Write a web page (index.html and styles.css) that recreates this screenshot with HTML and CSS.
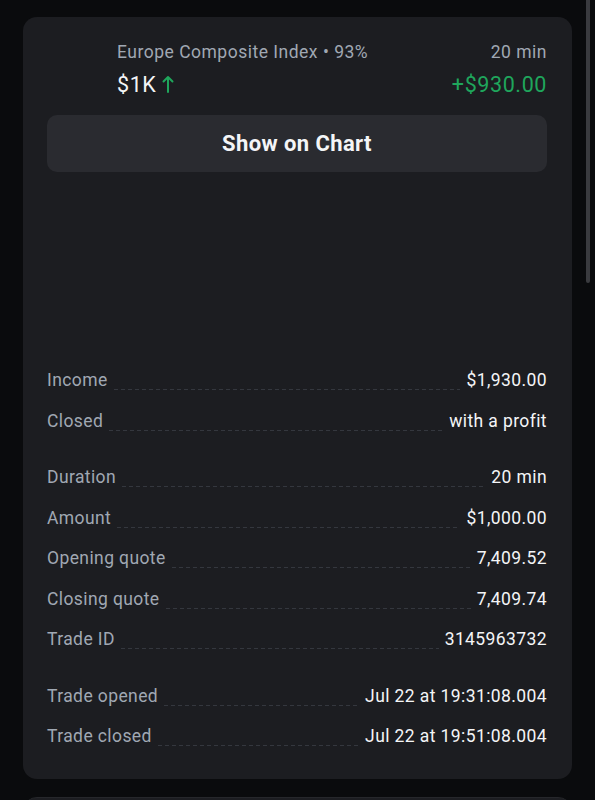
FILE: index.html
```html
<!DOCTYPE html>
<html lang="en">
<head>
<meta charset="utf-8">
<title>Trade details</title>
<link rel="stylesheet" href="styles.css">
</head>
<body>
<div class="page">
  <div class="card">
    <div class="head">
      <div class="head-row">
        <span class="asset">Europe Composite Index • 93%</span>
        <span class="dur">20 min</span>
      </div>
      <div class="head-row second">
        <span class="amount">$1K
          <svg class="arrow" width="12" height="18" viewBox="0 0 12 18"><path d="M6 17V2M1.5 6.5L6 2l4.5 4.5" fill="none" stroke="#1fa65c" stroke-width="2" stroke-linecap="round" stroke-linejoin="round"/></svg>
        </span>
        <span class="profit">+$930.00</span>
      </div>
    </div>
    <button class="chart-btn">Show on Chart</button>
    <div class="details">
      <div class="group">
        <div class="row"><span class="label">Income</span><span class="dots"></span><span class="value">$1,930.00</span></div>
        <div class="row"><span class="label">Closed</span><span class="dots"></span><span class="value">with a profit</span></div>
      </div>
      <div class="group">
        <div class="row"><span class="label">Duration</span><span class="dots"></span><span class="value">20 min</span></div>
        <div class="row"><span class="label">Amount</span><span class="dots"></span><span class="value">$1,000.00</span></div>
        <div class="row"><span class="label">Opening quote</span><span class="dots"></span><span class="value">7,409.52</span></div>
        <div class="row"><span class="label">Closing quote</span><span class="dots"></span><span class="value">7,409.74</span></div>
        <div class="row"><span class="label">Trade ID</span><span class="dots"></span><span class="value">3145963732</span></div>
      </div>
      <div class="group">
        <div class="row"><span class="label">Trade opened</span><span class="dots"></span><span class="value">Jul 22 at 19:31:08.004</span></div>
        <div class="row"><span class="label">Trade closed</span><span class="dots"></span><span class="value">Jul 22 at 19:51:08.004</span></div>
      </div>
    </div>
  </div>
  <div class="card next"></div>
  <div class="scrollbar"></div>
</div>
</body>
</html>
```
FILE: styles.css
```css
* { box-sizing: border-box; }
html, body { margin: 0; padding: 0; }
body {
  background: #0a0b0d;
  font-family: Roboto, "Liberation Sans", sans-serif;
  width: 595px;
  height: 800px;
  overflow: hidden;
}
.page {
  position: relative;
  padding: 17px 0 0 23px;
}
.card {
  width: 549px;
  height: 762px;
  background: #1c1d21;
  border-radius: 14px;
  padding: 23px 25px 0 24px;
}
.card.next {
  margin-top: 18px;
  height: 40px;
  border-top: 1px solid #26272b;
}
.scrollbar {
  position: absolute;
  top: 0;
  left: 586px;
  width: 4px;
  height: 283px;
  background: #3a3b3f;
  border-radius: 0 0 2px 2px;
}
.head {
  padding-left: 70px;
}
.head-row {
  display: flex;
  justify-content: space-between;
  align-items: center;
  height: 24px;
  font-size: 17.5px;
  letter-spacing: 0.5px;
  color: #a0a8b3;
}
.head-row.second {
  margin-top: 6px;
  height: 28px;
  font-size: 21.5px;
  letter-spacing: 0.6px;
}
.amount {
  color: #f4f5f7;
  display: flex;
  align-items: center;
  gap: 6px;
}
.arrow { display: block; }
.profit { color: #1fa65c; }
.chart-btn {
  display: block;
  width: 500px;
  height: 57px;
  margin-top: 17px;
  border: none;
  border-radius: 10px;
  background: #2a2b30;
  color: #f4f5f7;
  font-family: Roboto, "Liberation Sans", sans-serif;
  font-weight: 700;
  font-size: 22px;
  letter-spacing: 0.4px;
}
.details {
  margin-top: 188px;
  display: flex;
  flex-direction: column;
  gap: 16.5px;
}
.row {
  display: flex;
  align-items: center;
  height: 40.4px;
  font-size: 17.5px;
  letter-spacing: 0.4px;
}
.label { color: #a0a8b3; }
.value { color: #f4f5f7; }
.dots {
  flex: 1;
  align-self: center;
  margin: 19px 6px 0 6px;
  height: 1px;
  background-image: linear-gradient(to right, #34373e 0 4px, transparent 4px 7px);
  background-size: 7px 1px;
  background-repeat: repeat-x;
}
```
